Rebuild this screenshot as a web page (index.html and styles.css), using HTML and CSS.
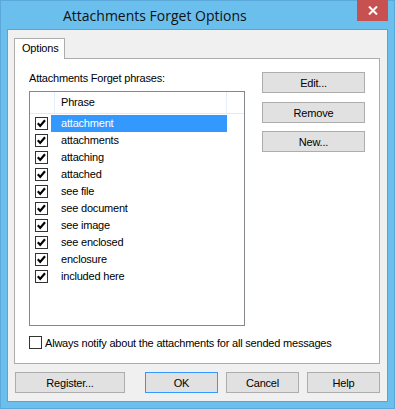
FILE: index.html
```html
<!DOCTYPE html>
<html lang="en">

<head>
    <meta charset="UTF-8">
    <title>Attachments Forget Options</title>
    <link rel="stylesheet" href="styles.css">
</head>

<body>
    <div class="window">
        <div class="titlebar">
            <span class="title">Attachments Forget Options</span>
            <div class="close">
                <svg width="10" height="9" viewBox="0 0 10 9"><path d="M1 0.5l8 8M9 0.5l-8 8" stroke="#fff" stroke-width="2"/></svg>
            </div>
        </div>

        <div class="client">
            <div class="tabs">
                <div class="tab">Options</div>
            </div>

            <div class="panel">
                <div class="panel-main">
                    <div class="phrases">
                        <div class="label">Attachments Forget phrases:</div>
                        <div class="listview">
                            <div class="lv-header">
                                <div class="lv-col col-check"></div>
                                <div class="lv-col col-phrase">Phrase</div>
                            </div>
                            <ul class="lv-rows">
                                <li class="lv-row selected">
                                    <svg class="cb" width="13" height="13" viewBox="0 0 13 13"><rect x="0.5" y="0.5" width="12" height="12" fill="#fff" stroke="#333"/><path d="M2.8 6.3l2.4 2.6 4.8-5.6" fill="none" stroke="#000" stroke-width="2.2"/></svg>
                                    <span class="lv-text">attachment</span>
                                </li>
                                <li class="lv-row">
                                    <svg class="cb" width="13" height="13" viewBox="0 0 13 13"><rect x="0.5" y="0.5" width="12" height="12" fill="#fff" stroke="#333"/><path d="M2.8 6.3l2.4 2.6 4.8-5.6" fill="none" stroke="#000" stroke-width="2.2"/></svg>
                                    <span class="lv-text">attachments</span>
                                </li>
                                <li class="lv-row">
                                    <svg class="cb" width="13" height="13" viewBox="0 0 13 13"><rect x="0.5" y="0.5" width="12" height="12" fill="#fff" stroke="#333"/><path d="M2.8 6.3l2.4 2.6 4.8-5.6" fill="none" stroke="#000" stroke-width="2.2"/></svg>
                                    <span class="lv-text">attaching</span>
                                </li>
                                <li class="lv-row">
                                    <svg class="cb" width="13" height="13" viewBox="0 0 13 13"><rect x="0.5" y="0.5" width="12" height="12" fill="#fff" stroke="#333"/><path d="M2.8 6.3l2.4 2.6 4.8-5.6" fill="none" stroke="#000" stroke-width="2.2"/></svg>
                                    <span class="lv-text">attached</span>
                                </li>
                                <li class="lv-row">
                                    <svg class="cb" width="13" height="13" viewBox="0 0 13 13"><rect x="0.5" y="0.5" width="12" height="12" fill="#fff" stroke="#333"/><path d="M2.8 6.3l2.4 2.6 4.8-5.6" fill="none" stroke="#000" stroke-width="2.2"/></svg>
                                    <span class="lv-text">see file</span>
                                </li>
                                <li class="lv-row">
                                    <svg class="cb" width="13" height="13" viewBox="0 0 13 13"><rect x="0.5" y="0.5" width="12" height="12" fill="#fff" stroke="#333"/><path d="M2.8 6.3l2.4 2.6 4.8-5.6" fill="none" stroke="#000" stroke-width="2.2"/></svg>
                                    <span class="lv-text">see document</span>
                                </li>
                                <li class="lv-row">
                                    <svg class="cb" width="13" height="13" viewBox="0 0 13 13"><rect x="0.5" y="0.5" width="12" height="12" fill="#fff" stroke="#333"/><path d="M2.8 6.3l2.4 2.6 4.8-5.6" fill="none" stroke="#000" stroke-width="2.2"/></svg>
                                    <span class="lv-text">see image</span>
                                </li>
                                <li class="lv-row">
                                    <svg class="cb" width="13" height="13" viewBox="0 0 13 13"><rect x="0.5" y="0.5" width="12" height="12" fill="#fff" stroke="#333"/><path d="M2.8 6.3l2.4 2.6 4.8-5.6" fill="none" stroke="#000" stroke-width="2.2"/></svg>
                                    <span class="lv-text">see enclosed</span>
                                </li>
                                <li class="lv-row">
                                    <svg class="cb" width="13" height="13" viewBox="0 0 13 13"><rect x="0.5" y="0.5" width="12" height="12" fill="#fff" stroke="#333"/><path d="M2.8 6.3l2.4 2.6 4.8-5.6" fill="none" stroke="#000" stroke-width="2.2"/></svg>
                                    <span class="lv-text">enclosure</span>
                                </li>
                                <li class="lv-row">
                                    <svg class="cb" width="13" height="13" viewBox="0 0 13 13"><rect x="0.5" y="0.5" width="12" height="12" fill="#fff" stroke="#333"/><path d="M2.8 6.3l2.4 2.6 4.8-5.6" fill="none" stroke="#000" stroke-width="2.2"/></svg>
                                    <span class="lv-text">included here</span>
                                </li>
                            </ul>
                        </div>
                    </div>

                    <div class="side">
                        <button class="btn">Edit...</button>
                        <button class="btn">Remove</button>
                        <button class="btn btn-new">New...</button>
                    </div>
                </div>

                <div class="notify">
                    <svg class="cb" width="13" height="13" viewBox="0 0 13 13"><rect x="0.5" y="0.5" width="12" height="12" fill="#fff" stroke="#333"/></svg>
                    <span>Always notify about the attachments for all sended messages</span>
                </div>
            </div>

            <div class="footer">
                <button class="btn btn-register">Register...</button>
                <button class="btn btn-ok">OK</button>
                <button class="btn btn-small">Cancel</button>
                <button class="btn btn-small">Help</button>
            </div>
        </div>
    </div>
</body>

</html>
```

FILE: styles.css
```css
* {
    box-sizing: border-box;
}

body {
    margin: 0;
    font-family: "Liberation Sans", Arial, sans-serif;
    font-size: 11px;
    letter-spacing: -0.2px;
    color: #000;
}

.window {
    display: flex;
    flex-direction: column;
    width: 395px;
    height: 409px;
    background-color: #6bbfed;
    border: 1px solid #5aa9da;
}

.titlebar {
    display: flex;
    align-items: center;
    height: 28px;
}

.title {
    padding-left: 62px;
    font-family: "Open Sans", sans-serif;
    font-size: 14px;
    letter-spacing: 0;
    color: #111;
}

.close {
    display: flex;
    align-items: center;
    justify-content: center;
    align-self: flex-start;
    width: 31px;
    height: 21px;
    margin: -1px 6px 0 auto;
    background-color: #c75050;
}

.client {
    display: flex;
    flex-direction: column;
    height: 373px;
    margin: 0 6px;
    padding: 8px 7px 8px 6px;
    background-color: #f0f0f0;
    border: 1px solid #5aa3d2;
}

.tabs {
    display: flex;
    height: 20px;
}

.tab {
    position: relative;
    z-index: 1;
    width: 51px;
    height: 21px;
    padding-left: 7px;
    line-height: 18px;
    background-color: #fff;
    border: 1px solid #acacac;
    border-bottom: none;
}

.panel {
    display: flex;
    flex-direction: column;
    height: 306px;
    padding: 13px 14px 0 14px;
    background-color: #fff;
    border: 1px solid #acacac;
}

.panel-main {
    display: flex;
    align-items: flex-start;
    gap: 17px;
}

.phrases {
    width: 216px;
}

.label {
    line-height: 13px;
    margin-bottom: 6px;
}

.listview {
    height: 235px;
    background-color: #fff;
    border: 1px solid #828790;
}

.lv-header {
    display: flex;
    height: 22px;
    border-bottom: 1px solid #e5eaf2;
}

.lv-col {
    border-right: 1px solid #e5eefa;
}

.col-check {
    width: 25px;
}

.col-phrase {
    width: 172px;
    padding-left: 6px;
    line-height: 21px;
}

.lv-rows {
    list-style: none;
    margin: 0;
    padding: 1px 0 0 5px;
}

.lv-row {
    display: flex;
    align-items: center;
    gap: 3px;
    height: 17px;
}

.cb {
    flex: none;
    display: block;
}

.lv-text {
    width: 176px;
    padding-left: 10px;
    line-height: 17px;
}

.lv-row.selected .lv-text {
    background-color: #3399ff;
    color: #fff;
}

.side {
    display: flex;
    flex-direction: column;
    gap: 9px;
    width: 103px;
}

.btn {
    height: 21px;
    padding: 0;
    font-family: inherit;
    font-size: 11px;
    letter-spacing: -0.2px;
    color: #000;
    background-color: #e1e1e1;
    border: 1px solid #adadad;
}

.btn-new {
    margin-top: -1px;
}

.notify {
    display: flex;
    align-items: center;
    gap: 3px;
    height: 13px;
    margin-top: 10px;
}

.footer {
    display: flex;
    margin-top: 8px;
}

.btn-register {
    width: 110px;
    margin-left: 1px;
}

.btn-ok {
    width: 73px;
    margin-left: 20px;
    border-color: #3399ff;
}

.btn-small {
    width: 73px;
    margin-left: 8px;
}
```
